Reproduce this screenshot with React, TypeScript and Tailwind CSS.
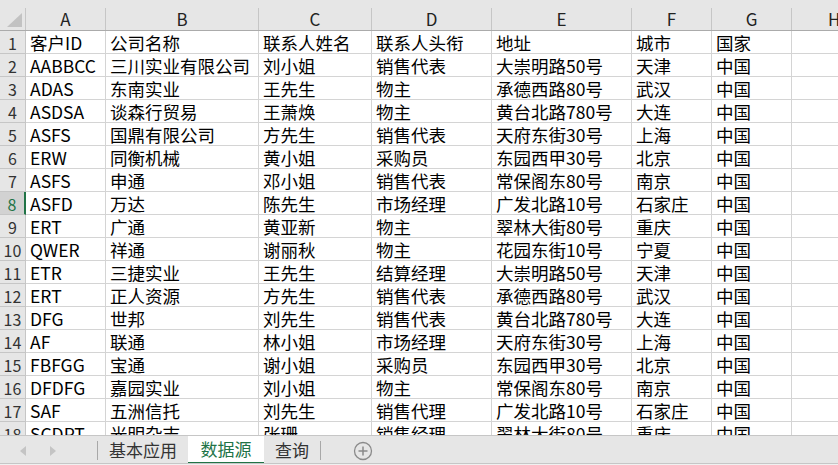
import React from "react";

const cols = [
  { l: "A", w: "w-[80px]" },
  { l: "B", w: "w-[153px]" },
  { l: "C", w: "w-[113px]" },
  { l: "D", w: "w-[120px]" },
  { l: "E", w: "w-[140px]" },
  { l: "F", w: "w-[80px]" },
  { l: "G", w: "w-[80px]" },
];

const rows: string[][] = [
  ["客户ID", "公司名称", "联系人姓名", "联系人头衔", "地址", "城市", "国家"],
  ["AABBCC", "三川实业有限公司", "刘小姐", "销售代表", "大崇明路50号", "天津", "中国"],
  ["ADAS", "东南实业", "王先生", "物主", "承德西路80号", "武汉", "中国"],
  ["ASDSA", "谈森行贸易", "王萧焕", "物主", "黄台北路780号", "大连", "中国"],
  ["ASFS", "国鼎有限公司", "方先生", "销售代表", "天府东街30号", "上海", "中国"],
  ["ERW", "同衡机械", "黄小姐", "采购员", "东园西甲30号", "北京", "中国"],
  ["ASFS", "申通", "邓小姐", "销售代表", "常保阁东80号", "南京", "中国"],
  ["ASFD", "万达", "陈先生", "市场经理", "广发北路10号", "石家庄", "中国"],
  ["ERT", "广通", "黄亚新", "物主", "翠林大街80号", "重庆", "中国"],
  ["QWER", "祥通", "谢丽秋", "物主", "花园东街10号", "宁夏", "中国"],
  ["ETR", "三捷实业", "王先生", "结算经理", "大崇明路50号", "天津", "中国"],
  ["ERT", "正人资源", "方先生", "销售代表", "承德西路80号", "武汉", "中国"],
  ["DFG", "世邦", "刘先生", "销售代表", "黄台北路780号", "大连", "中国"],
  ["AF", "联通", "林小姐", "市场经理", "天府东街30号", "上海", "中国"],
  ["FBFGG", "宝通", "谢小姐", "采购员", "东园西甲30号", "北京", "中国"],
  ["DFDFG", "嘉园实业", "刘小姐", "物主", "常保阁东80号", "南京", "中国"],
  ["SAF", "五洲信托", "刘先生", "销售代理", "广发北路10号", "石家庄", "中国"],
  ["SCDPT", "光明杂志", "张珊", "销售经理", "翠林大街80号", "重庆", "中国"],
];

export default function App() {
  return (
    <div
      className="w-[838px] h-[465px] overflow-hidden flex flex-col bg-white text-black"
      style={{ fontFamily: '"Noto Sans CJK SC", "Noto Sans", sans-serif' }}
    >
      {/* column header */}
      <div className="h-[31px] shrink-0 bg-[#e6e6e6] border-b border-[#ababab] flex items-end">
        <div className="flex h-[22px] w-full">
          <div className="w-[26px] shrink-0 border-r border-[#c6c6c6] relative">
            <svg className="absolute left-[7px] top-[5px]" width="15" height="14" viewBox="0 0 15 14">
              <polygon points="15,0 15,14 0,14" fill="#c2c2c2" />
            </svg>
          </div>
          {cols.map((c) => (
            <div
              key={c.l}
              className={`${c.w} shrink-0 border-r border-[#c6c6c6] flex items-center justify-center text-[17px] leading-[22px] text-[#222]`}
            >
              {c.l}
            </div>
          ))}
          <div className="flex-1 flex items-center pl-[36px] text-[17px] leading-[22px] text-[#222]">H</div>
        </div>
      </div>

      {/* body */}
      <div className="flex-1 overflow-hidden">
        {rows.map((r, i) => {
          const sel = i === 7;
          return (
            <div key={i} className="flex h-[23px]">
              <div
                className={`w-[26px] shrink-0 flex items-center justify-center text-[16px] leading-[22px] pt-[1px] border-b ${
                  sel
                    ? "bg-[#d2d2d2] text-[#217346] border-r-2 border-r-[#217346] border-b-[#c6c6c6]"
                    : "bg-[#e6e6e6] text-[#333] border-r border-r-[#c6c6c6] border-b-[#c6c6c6]"
                }`}
              >
                {i + 1}
              </div>
              {cols.map((c, j) => (
                <div
                  key={c.l}
                  className={`${c.w} shrink-0 border-r border-b border-[#d4d4d4] flex items-center pl-[4px] pt-[2px] text-[17.5px] leading-[20px] whitespace-nowrap`}
                >
                  {r[j]}
                </div>
              ))}
              <div className="flex-1 border-b border-[#d4d4d4]" />
            </div>
          );
        })}
      </div>

      {/* sheet tabs */}
      <div className="h-[30px] shrink-0 bg-[#e6e6e6] border-t border-[#c6c6c6] flex items-stretch relative z-10">
        <div className="w-[97px] shrink-0 flex items-center">
          <svg className="ml-[20px]" width="6" height="10" viewBox="0 0 6 10">
            <polygon points="6,0 6,10 0,5" fill="#c4c4c4" />
          </svg>
          <svg className="ml-[24px]" width="6" height="10" viewBox="0 0 6 10">
            <polygon points="0,0 0,10 6,5" fill="#c4c4c4" />
          </svg>
        </div>
        <div className="w-px bg-[#a8a8a8] my-[5px]" />
        <div className="w-[90px] flex items-center justify-center text-[17px] leading-[22px] text-[#333] pb-[2px]">
          基本应用
        </div>
        <div className="w-[76px] bg-white border-b-[3px] border-[#217346] flex items-center justify-center text-[17px] leading-[22px] text-[#217346]">
          数据源
        </div>
        <div className="w-[56px] flex items-center justify-center text-[17px] leading-[22px] text-[#333] pb-[2px]">
          查询
        </div>
        <div className="w-px bg-[#a8a8a8] my-[5px]" />
        <div className="flex items-center ml-[32px]">
          <svg width="20" height="20" viewBox="0 0 20 20">
            <circle cx="10" cy="10" r="8.5" fill="none" stroke="#8a8a8a" strokeWidth="1.3" />
            <line x1="10" y1="5.5" x2="10" y2="14.5" stroke="#8a8a8a" strokeWidth="1.5" />
            <line x1="5.5" y1="10" x2="14.5" y2="10" stroke="#8a8a8a" strokeWidth="1.5" />
          </svg>
        </div>
        <div className="absolute left-0 right-0 bottom-0 h-[2px] bg-[#f0f0f0] border-t border-[#c6c6c6]" />
      </div>
    </div>
  );
}
